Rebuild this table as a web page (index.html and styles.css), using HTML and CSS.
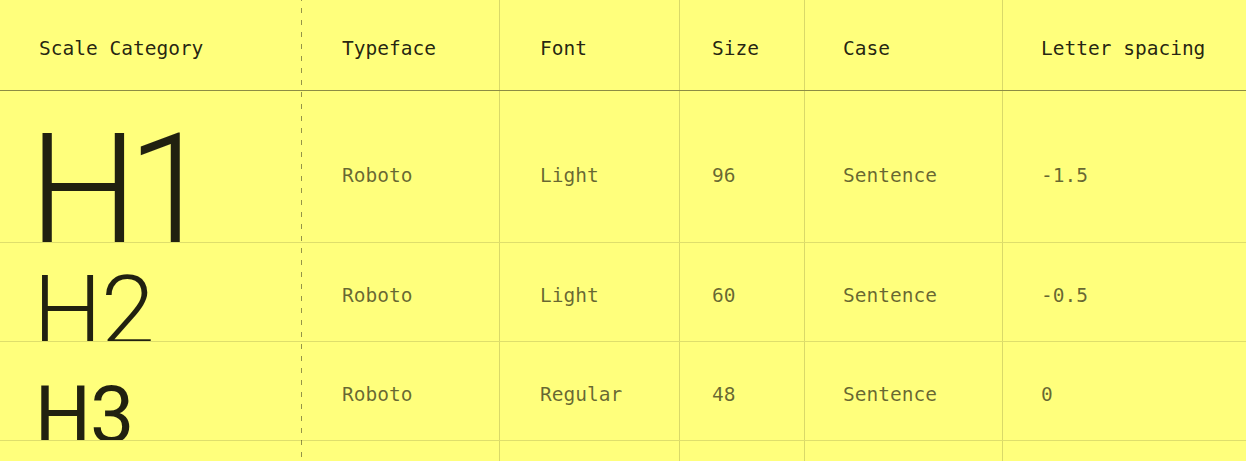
FILE: index.html
```html
<!DOCTYPE html>
<html lang="en">
<head>
<meta charset="utf-8">
<title>Type scale</title>
<link rel="stylesheet" href="styles.css">
</head>
<body>
<div class="table">
  <div class="row head">
    <div class="cell c1">Scale Category</div>
    <div class="cell c2">Typeface</div>
    <div class="cell c3">Font</div>
    <div class="cell c4">Size</div>
    <div class="cell c5">Case</div>
    <div class="cell c6">Letter spacing</div>
  </div>
  <div class="row r1">
    <div class="cell c1 scale"><span class="sample s1">H1</span></div>
    <div class="cell c2">Roboto</div>
    <div class="cell c3">Light</div>
    <div class="cell c4">96</div>
    <div class="cell c5">Sentence</div>
    <div class="cell c6">-1.5</div>
  </div>
  <div class="row r2">
    <div class="cell c1 scale"><span class="sample s2">H2</span></div>
    <div class="cell c2">Roboto</div>
    <div class="cell c3">Light</div>
    <div class="cell c4">60</div>
    <div class="cell c5">Sentence</div>
    <div class="cell c6">-0.5</div>
  </div>
  <div class="row r3">
    <div class="cell c1 scale"><span class="sample s3">H3</span></div>
    <div class="cell c2">Roboto</div>
    <div class="cell c3">Regular</div>
    <div class="cell c4">48</div>
    <div class="cell c5">Sentence</div>
    <div class="cell c6">0</div>
  </div>
  <div class="row r4">
    <div class="cell c1 scale"><span class="sample s4">H4</span></div>
    <div class="cell c2">Roboto</div>
    <div class="cell c3">Regular</div>
    <div class="cell c4">34</div>
    <div class="cell c5">Sentence</div>
    <div class="cell c6">0.25</div>
  </div>
</div>
</body>
</html>
```

FILE: styles.css
```css
html, body {
  margin: 0;
  padding: 0;
}

body {
  background: #ffff7c;
  font-family: "DejaVu Sans Mono", "Liberation Mono", monospace;
  overflow: hidden;
}

.table {
  height: 461px;
  overflow: hidden;
  background-color: #ffff7c;
  background-image: linear-gradient(to bottom, rgba(0, 0, 0, 0.42) 5px, transparent 5px);
  background-position: 301px 8px;
  background-size: 1px 12px;
  background-repeat: repeat-y;
}

.row {
  display: grid;
  grid-template-columns: 301px 198px 180px 125px 198px 1fr;
  box-sizing: border-box;
  border-bottom: 1px solid rgba(0, 0, 0, 0.13);
}

.head {
  height: 91px;
  border-bottom-color: rgba(0, 0, 0, 0.45);
}

.r1 {
  height: 152px;
}

.r2,
.r3,
.r4 {
  height: 99px;
}

.cell {
  display: flex;
  align-items: center;
  box-sizing: border-box;
  padding-top: 6px;
  font-size: 19.5px;
  color: rgba(0, 0, 0, 0.6);
  white-space: nowrap;
  border-left: 1px solid rgba(0, 0, 0, 0.15);
}

.head .cell {
  color: rgba(0, 0, 0, 0.87);
  padding-top: 7px;
}

.r1 .cell {
  padding-top: 17px;
}

.c1 {
  border-left: none;
  padding-left: 39px;
}

.c2 {
  border-left: none;
  padding-left: 41px;
}

.c3 {
  padding-left: 40px;
}

.c4 {
  padding-left: 32px;
}

.c5 {
  padding-left: 38px;
}

.c6 {
  padding-left: 38px;
}

.cell.scale {
  align-items: flex-end;
  overflow: hidden;
  padding-top: 0;
  padding-left: 41px;
}

.r1 .cell.scale {
  padding-top: 0;
}

.sample {
  font-family: Roboto, "Noto Sans", sans-serif;
  line-height: 1;
  color: rgba(0, 0, 0, 0.87);
  margin-left: -0.08em;
}

.s1 {
  font-size: 155px;
  font-weight: 300;
  letter-spacing: -11px;
  margin-bottom: calc(-0.158em - 3px);
}

.s2 {
  font-size: 97px;
  font-weight: 300;
  letter-spacing: -1px;
  margin-bottom: calc(-0.158em - 4px);
}

.s3 {
  font-size: 79px;
  font-weight: 400;
  letter-spacing: -1px;
  margin-bottom: calc(-0.158em - 3px);
}

.s4 {
  font-size: 56px;
  font-weight: 400;
}
```
